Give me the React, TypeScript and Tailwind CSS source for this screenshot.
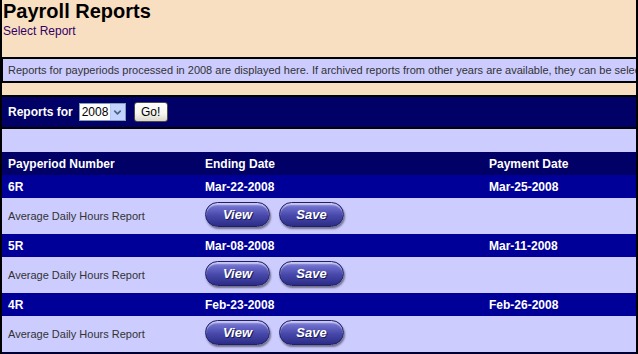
import { ChevronDown } from "lucide-react";

const periods = [
  { id: "6R", ending: "Mar-22-2008", payment: "Mar-25-2008" },
  { id: "5R", ending: "Mar-08-2008", payment: "Mar-11-2008" },
  { id: "4R", ending: "Feb-23-2008", payment: "Feb-26-2008" },
];

const PillButton = ({ label }: { label: string }) => (
  <button className="w-[65px] h-[25px] rounded-full border border-[#1f1f66] bg-[linear-gradient(to_bottom,#a4a4e6_0%,#6d6dcc_18%,#4848aa_55%,#2c2c88_100%)] shadow-[inset_0_2px_1px_rgba(255,255,255,0.45),1px_2px_2px_rgba(0,0,0,0.45)] text-white italic font-bold text-[13px] leading-none [text-shadow:1px_1px_0_#1a1a55]">
    {label}
  </button>
);

const App = () => {
  return (
    <div className="w-[638px] h-[354px] overflow-hidden bg-[#f9dfc1] border-x-2 border-black font-['Liberation_Sans',Arial,sans-serif]">
      <div className="pl-[1px]">
        <h1 className="text-[20px] font-bold leading-[23px] text-black">Payroll Reports</h1>
        <div className="mt-[1px] text-[12px] leading-[14px] text-[#330066]">Select Report</div>
      </div>

      <div className="mt-[19px] h-[26px] border-y-2 border-l border-black bg-[#ccccff] pl-[5px] text-[11px] leading-[22px] text-[#333333] whitespace-nowrap overflow-hidden">
        Reports for payperiods processed in 2008 are displayed here. If archived reports from other years are available, they can be selected from the list below.
      </div>

      <div className="mt-[12px] border-y-2 border-black bg-[#000066] h-[34px] flex items-center pl-[6px]">
        <span className="text-white font-bold text-[12px]">Reports for</span>
        <div className="ml-[6px] w-[47px] h-[18px] bg-white border border-[#7f9db9] flex items-center">
          <span className="flex-1 pl-[2px] text-[12px] leading-none text-black">2008</span>
          <span className="w-[15px] h-[16px] bg-[#c3d3fd] border-l border-[#b6c8f6] flex items-center justify-center">
            <ChevronDown className="w-[11px] h-[11px] text-[#4d6185]" strokeWidth={3.5} />
          </span>
        </div>
        <button className="ml-[8px] w-[34px] h-[20px] rounded-[3px] border border-[#4b4b4b] bg-[linear-gradient(to_bottom,#ffffff_0%,#f4f4f0_60%,#d9d7cc_100%)] text-[12px] leading-none text-black">
          Go!
        </button>
      </div>

      <div className="h-[23px] bg-[#ccccff]" />

      <div className="border-b-2 border-[#000033]">
        <div className="grid grid-cols-[197px_284px_1fr] h-[23px] items-center bg-[#000066] text-white font-bold text-[12px]">
          <span className="pl-[6px]">Payperiod Number</span>
          <span className="pl-[6px]">Ending Date</span>
          <span className="pl-[6px]">Payment Date</span>
        </div>
        {periods.map((p) => (
          <div key={p.id}>
            <div className="grid grid-cols-[197px_284px_1fr] h-[23px] items-center bg-[#000099] text-white font-bold text-[12px]">
              <span className="pl-[6px]">{p.id}</span>
              <span className="pl-[6px]">{p.ending}</span>
              <span className="pl-[6px]">{p.payment}</span>
            </div>
            <div className="grid grid-cols-[197px_284px_1fr] h-[36px] items-center bg-[#ccccff]">
              <span className="pl-[6px] text-[11px] text-[#333333]">Average Daily Hours Report</span>
              <div className="pl-[6px] pb-[3px] flex items-center gap-[9px]">
                <PillButton label="View" />
                <PillButton label="Save" />
              </div>
              <span />
            </div>
          </div>
        ))}
      </div>
    </div>
  );
};

export default App;
